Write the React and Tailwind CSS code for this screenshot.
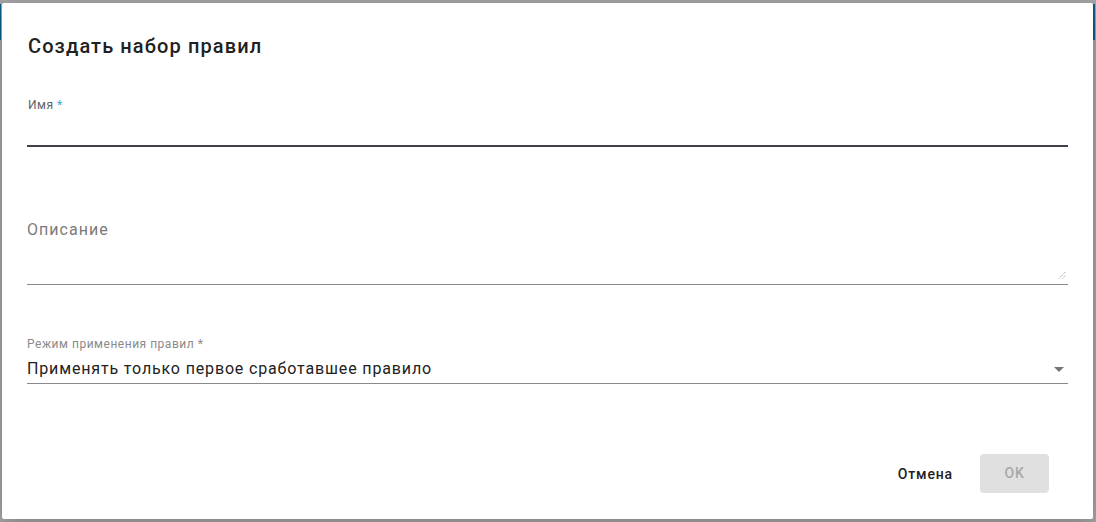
const font = { fontFamily: 'Roboto, "Noto Sans", sans-serif' }

const ResizeHandle = () => (
  <svg width="8" height="8" viewBox="0 0 8 8" className="absolute right-[2px] bottom-[5px]">
    <path d="M1 7.5 L7.5 1 M4.5 7.5 L7.5 4.5" stroke="#8c8c8c" strokeWidth="1" strokeDasharray="1 1" />
  </svg>
)

export default function App() {
  return (
    <div className="relative w-[1096px] h-[522px] bg-[#a6a6a6] overflow-hidden" style={font}>
      {/* page content peeking from behind the overlay */}
      <div className="absolute left-0 top-[4px] w-[1px] h-[36px] bg-[#0b5f8f]" />
      <div className="absolute right-[1px] top-[4px] w-[2px] h-[36px] bg-[#0b5f8f]" />

      <div className="absolute left-[2px] top-[3px] w-[1091px] h-[516px] bg-white rounded-[2px] shadow-[0_4px_20px_rgba(0,0,0,0.25)] flex flex-col px-[25px]">
        <h2 className="mt-[27px] pl-[1px] text-[20px] leading-[32px] font-medium tracking-[0.055em] text-[#212121]">
          Создать набор правил
        </h2>

        <div className="mt-[35px] flex flex-col">
          <label className="pl-[1px] text-[12px] leading-[16px] tracking-[0.04em] text-[#5c5f6a]">
            Имя <span className="text-[#3aa6e6]">*</span>
          </label>
          <div className="h-[34px] border-b-2 border-[#3f3f4e]" />
        </div>

        <div className="mt-[71px] relative h-[67px] border-b border-[#8a8a8a]">
          <div className="text-[16px] leading-[24px] tracking-[0.065em] text-[#7a7a7a]">Описание</div>
          <ResizeHandle />
        </div>

        <div className="mt-[51px] flex flex-col">
          <label className="text-[12px] leading-[16px] tracking-[0.043em] text-[#8a8a8a]">
            Режим применения правил *
          </label>
          <div className="mt-[5px] pb-[2px] flex items-center justify-between border-b border-[#8a8a8a] pr-[4px]">
            <span className="text-[16px] leading-[24px] tracking-[0.053em] text-[#212121]">
              Применять только первое сработавшее правило
            </span>
            <svg width="10" height="5" viewBox="0 0 10 5">
              <path d="M0 0 L10 0 L5 5 Z" fill="#757575" />
            </svg>
          </div>
        </div>

        <div className="mt-auto mb-[26px] mr-[19px] flex items-center justify-end gap-[27px]">
          <button className="text-[14px] font-medium text-[#212121] leading-[20px] tracking-[0.06em]">Отмена</button>
          <button className="w-[69px] h-[39px] rounded-[4px] bg-[#e0e0e0] text-[14px] font-medium text-[#a8a8a8] tracking-[0.05em]">
            OK
          </button>
        </div>
      </div>
    </div>
  )
}
